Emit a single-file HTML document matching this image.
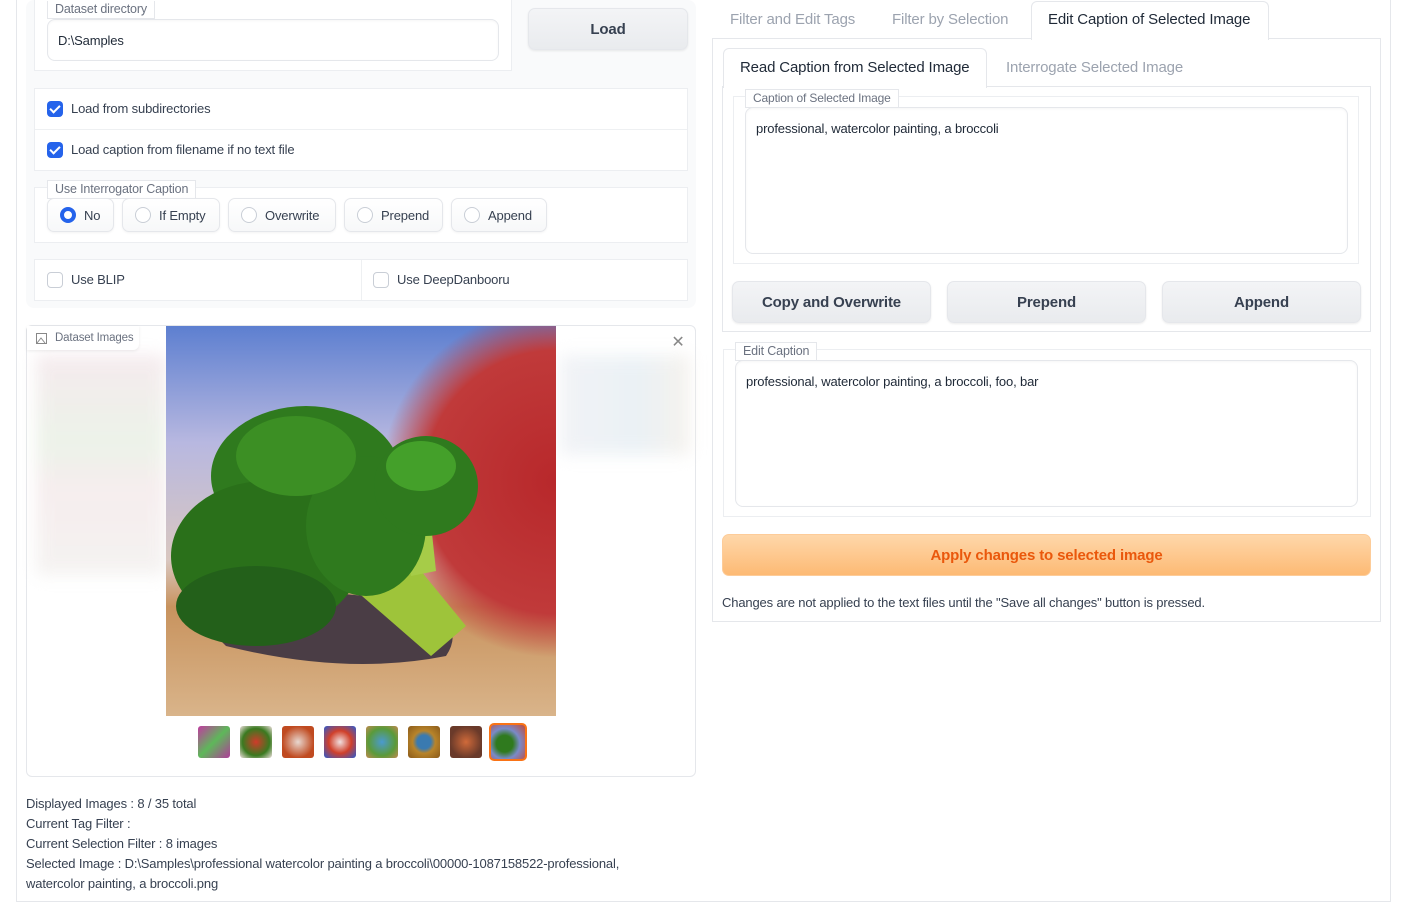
<!DOCTYPE html>
<html><head><style>
*{box-sizing:border-box;margin:0;padding:0}
body{width:1407px;height:903px;background:#fff;font-family:"Source Sans Pro","Liberation Sans",sans-serif;color:#374151;position:relative;overflow:hidden;font-size:13px;letter-spacing:-0.15px}
.a{position:absolute}
.frame{left:16px;top:-2px;width:1375px;height:904px;border:1px solid #e5e7eb;border-top:none}
.panel{background:#f9fafb;border-radius:8px}
.blk{background:#fff;border:1px solid #eceef1;}
.lbl{position:absolute;font-size:12.5px;color:#6b7280;background:#fff;border:1px solid #e5e7eb;border-top:none;padding:0 7px;line-height:17px}
.inp{position:absolute;background:#fff;border:1px solid #e5e7eb;border-radius:8px;box-shadow:inset 0 1px 2px rgba(0,0,0,.04);font-size:13px;color:#1f2937}
.btn{position:absolute;background:linear-gradient(#f3f4f6,#e9ebee);border:1px solid #e5e7eb;border-radius:7px;box-shadow:0 1px 2px rgba(0,0,0,.08);font-weight:600;font-size:15px;color:#374151;text-align:center}
.cb{position:absolute;width:16px;height:16px;border-radius:4px;background:#2563eb}
.cb::after{content:"";position:absolute;left:5px;top:2px;width:4px;height:8px;border:solid #fff;border-width:0 2px 2px 0;transform:rotate(45deg)}
.ucb{position:absolute;width:16px;height:16px;border-radius:4px;border:1px solid #c9ced6;background:#fff}
.t{position:absolute;font-size:13px;color:#374151;white-space:nowrap}
.rad{position:absolute;height:34px;top:198px;border:1px solid #e5e7eb;border-radius:7px;background:linear-gradient(#fff,#f7f8f9);box-shadow:0 1px 2px rgba(0,0,0,.05);font-size:13px;line-height:33px;padding-left:36px}
.rad::before{content:"";position:absolute;left:12px;top:8px;width:16px;height:16px;border-radius:50%;border:1px solid #c9ced6;background:#fff;box-sizing:border-box}
.rad.on::before{border:4.5px solid #2563eb}
.tab{position:absolute;font-size:15px;color:#9ca3af;white-space:nowrap}
.th{position:absolute;width:32px;height:32px;top:726px;border-radius:3px}
</style></head><body>
<div class="a frame"></div>

<div class="a panel" style="left:26px;top:0;width:670px;height:308px"></div>
<div class="a blk" style="left:34px;top:0;width:478px;height:71px;border-top:none"></div>
<div class="lbl" style="left:47px;top:1px">Dataset directory</div>
<div class="inp" style="left:47px;top:19px;width:452px;height:42px;padding:13px 10px">D:\Samples</div>
<div class="btn" style="left:528px;top:8px;width:160px;height:42px;line-height:42px">Load</div>

<div class="a blk" style="left:34px;top:88px;width:654px;height:83px"></div>
<div class="a" style="left:35px;top:129px;width:652px;height:1px;background:#eef0f2"></div>
<div class="cb" style="left:47px;top:101px"></div><div class="t" style="left:71px;top:101px">Load from subdirectories</div>
<div class="cb" style="left:47px;top:142px"></div><div class="t" style="left:71px;top:142px">Load caption from filename if no text file</div>

<div class="a blk" style="left:34px;top:187px;width:654px;height:56px"></div>
<div class="lbl" style="left:47px;top:180px;border-top:1px solid #e5e7eb">Use Interrogator Caption</div>
<div class="rad on" style="left:47px;width:67px">No</div>
<div class="rad" style="left:122px;width:98px">If Empty</div>
<div class="rad" style="left:228px;width:108px">Overwrite</div>
<div class="rad" style="left:344px;width:99px">Prepend</div>
<div class="rad" style="left:451px;width:96px">Append</div>

<div class="a blk" style="left:34px;top:259px;width:654px;height:42px"></div>
<div class="a" style="left:361px;top:260px;width:1px;height:40px;background:#eef0f2"></div>
<div class="ucb" style="left:47px;top:272px"></div><div class="t" style="left:71px;top:272px">Use BLIP</div>
<div class="ucb" style="left:373px;top:272px"></div><div class="t" style="left:397px;top:272px">Use DeepDanbooru</div>

<div class="a" style="left:26px;top:325px;width:670px;height:452px;border:1px solid #e5e7eb;border-radius:6px;background:#fff"></div>
<div class="a" style="left:36px;top:355px;width:130px;height:220px;filter:blur(8px);background:linear-gradient(#f3e6ea,#e8f0e4 40%,#f4e9ea 60%,#f2f0ee);opacity:.8"></div>
<div class="a" style="left:560px;top:355px;width:130px;height:100px;filter:blur(8px);background:linear-gradient(90deg,#eef0f4,#e6eef3 60%,#f3efe9);opacity:.8"></div>
<div class="a" style="left:27px;top:326px;width:112px;height:24px;background:#fff;border-radius:0 0 6px 0;box-shadow:0 1px 3px rgba(0,0,0,.08);font-size:11.5px;color:#6b7280;line-height:24px;padding-left:28px">Dataset Images</div>
<svg class="a" style="left:36px;top:333px" width="11" height="11" viewBox="0 0 11 11"><rect x=".5" y=".5" width="10" height="10" fill="none" stroke="#888"/><path d="M1 10L5 5l4 5" fill="none" stroke="#888"/></svg>
<div class="a" style="left:668px;top:333px;width:20px;height:20px;font-size:16px;color:#888;text-align:center;line-height:20px">✕</div>

<svg class="a" style="left:166px;top:326px" width="390" height="390" viewBox="0 0 390 390">
<defs>
<linearGradient id="bg" x1="0" y1="0" x2="0" y2="1"><stop offset="0" stop-color="#5d7fd0"/><stop offset=".3" stop-color="#b8b8e0"/><stop offset=".6" stop-color="#d9c7c0"/><stop offset=".72" stop-color="#c8935e"/><stop offset="1" stop-color="#d9b48a"/></linearGradient>
<radialGradient id="r" cx="1" cy=".4" r=".45"><stop offset="0" stop-color="#b8282b"/><stop offset=".75" stop-color="#c03a3a"/><stop offset="1" stop-color="#c03a3a" stop-opacity="0"/></radialGradient>
</defs>
<rect width="390" height="390" fill="url(#bg)"/>
<rect width="390" height="390" fill="url(#r)"/>
<path d="M30 290 Q120 250 260 280 Q300 300 280 330 Q180 350 60 320Z" fill="#4a3d45"/>
<path d="M150 230 L265 330 L300 300 L210 190Z" fill="#9ec43a"/>
<path d="M245 250 L270 245 L262 170 L238 180Z" fill="#a6cc48"/>
<ellipse cx="140" cy="150" rx="95" ry="70" fill="#2f7a1e"/>
<ellipse cx="100" cy="230" rx="95" ry="75" fill="#2a701a"/>
<ellipse cx="200" cy="200" rx="60" ry="70" fill="#2f7a1e"/>
<ellipse cx="130" cy="130" rx="60" ry="40" fill="#3c8f24"/>
<ellipse cx="90" cy="280" rx="80" ry="40" fill="#23601a"/>
<ellipse cx="260" cy="160" rx="52" ry="50" fill="#2f7a1e"/>
<ellipse cx="255" cy="140" rx="35" ry="25" fill="#44a02a"/>
</svg>

<div class="th" style="left:198px;background:linear-gradient(135deg,#c03aa0,#5eb85a 50%,#b03c9a)"></div>
<div class="th" style="left:240px;background:radial-gradient(#d03a2a,#3a7a20 60%,#f0e0e0)"></div>
<div class="th" style="left:282px;background:radial-gradient(#e8d8d0,#c04a20 70%)"></div>
<div class="th" style="left:324px;background:radial-gradient(#f0e0e0,#d0402a 50%,#2a5ad0)"></div>
<div class="th" style="left:366px;background:radial-gradient(#4a9ad0,#5a9a3a 60%,#c08a50)"></div>
<div class="th" style="left:408px;background:radial-gradient(#3a7ab0 30%,#b8842a 50%,#8a5a1a)"></div>
<div class="th" style="left:450px;background:radial-gradient(#d06a3a,#6a3a2a 70%)"></div>
<div class="th" style="left:489px;top:723px;width:38px;height:38px;border:2px solid #f97316;border-radius:5px;background:radial-gradient(circle at 40% 55%,#2f7a1e 30%,#7a8ac8 55%,#c04a3a)"></div>

<div class="t" style="left:26px;top:794px;line-height:20px">Displayed Images : 8 / 35 total<br>Current Tag Filter :<br>Current Selection Filter : 8 images<br>Selected Image : D:\Samples\professional watercolor painting a broccoli\00000-1087158522-professional,<br>watercolor painting, a broccoli.png</div>

<div class="tab" style="left:730px;top:11px">Filter and Edit Tags</div>
<div class="tab" style="left:892px;top:11px">Filter by Selection</div>
<div class="a" style="left:712px;top:38px;width:669px;height:584px;border:1px solid #e5e7eb"></div>
<div class="a" style="left:1031px;top:1px;width:238px;height:39px;border:1px solid #e5e7eb;border-bottom:none;border-radius:6px 6px 0 0;background:#fff"></div>
<div class="tab" style="left:1048px;top:11px;color:#1f2937">Edit Caption of Selected Image</div>

<div class="a" style="left:722px;top:86px;width:649px;height:246px;border:1px solid #e5e7eb"></div>
<div class="a" style="left:723px;top:48px;width:264px;height:40px;border:1px solid #e5e7eb;border-bottom:none;border-radius:6px 6px 0 0;background:#fff"></div>
<div class="tab" style="left:740px;top:59px;color:#1f2937">Read Caption from Selected Image</div>
<div class="tab" style="left:1006px;top:59px">Interrogate Selected Image</div>

<div class="a" style="left:733px;top:96px;width:626px;height:168px;border:1px solid #eceef1"></div>
<div class="lbl" style="left:745px;top:89px;border-top:1px solid #e5e7eb;font-size:12px">Caption of Selected Image</div>
<div class="inp" style="left:745px;top:107px;width:603px;height:147px;padding:13px 10px">professional, watercolor painting, a broccoli</div>
<div class="btn" style="left:732px;top:281px;width:199px;height:42px;line-height:42px">Copy and Overwrite</div>
<div class="btn" style="left:947px;top:281px;width:199px;height:42px;line-height:42px">Prepend</div>
<div class="btn" style="left:1162px;top:281px;width:199px;height:42px;line-height:42px">Append</div>

<div class="a" style="left:723px;top:349px;width:648px;height:168px;border:1px solid #eceef1"></div>
<div class="lbl" style="left:735px;top:342px;border-top:1px solid #e5e7eb">Edit Caption</div>
<div class="inp" style="left:735px;top:360px;width:623px;height:147px;padding:13px 10px">professional, watercolor painting, a broccoli, foo, bar</div>

<div class="a" style="left:722px;top:534px;width:649px;height:42px;border-radius:7px;background:linear-gradient(#fed7aa,#fdba74);border:1px solid #fdcc99;color:#ea580c;font-weight:600;font-size:15px;text-align:center;line-height:42px">Apply changes to selected image</div>
<div class="t" style="left:722px;top:595px">Changes are not applied to the text files until the "Save all changes" button is pressed.</div>
</body></html>
